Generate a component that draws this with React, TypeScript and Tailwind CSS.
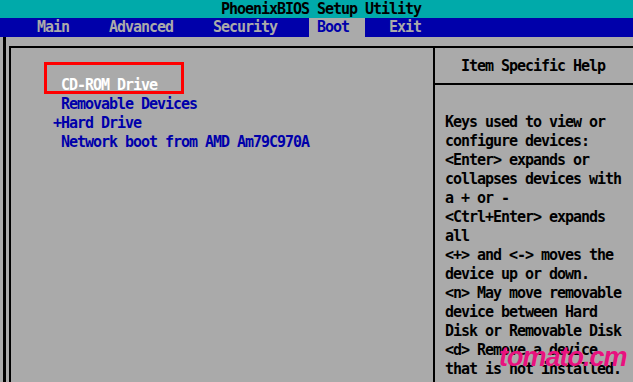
import React from "react";

const mono = "font-['DejaVu_Sans_Mono','Liberation_Mono',monospace] font-bold text-[15px] tracking-[-1.03px] whitespace-pre";

const helpLines = [
  "Keys used to view or",
  "configure devices:",
  "<Enter> expands or",
  "collapses devices with",
  "a + or -",
  "<Ctrl+Enter> expands",
  "all",
  "<+> and <-> moves the",
  "device up or down.",
  "<n> May move removable",
  "device between Hard",
  "Disk or Removable Disk",
  "<d> Remove a device",
  "that is not installed.",
];

export default function App() {
  return (
    <div className={`relative w-[633px] h-[382px] overflow-hidden bg-[#aaaaaa] flex flex-col ${mono}`}>
      {/* Title bar */}
      <div className="h-[18px] bg-[#00aaaa] text-black leading-[18px] pl-[221px] shrink-0">
        PhoenixBIOS Setup Utility
      </div>
      {/* Menu bar */}
      <div className="h-[19px] bg-[#0000aa] text-[#aaaaaa] leading-[19px] pl-[5px] shrink-0 flex">
        <span>{"    Main     Advanced     Security    "}</span>
        <span className="bg-[#aaaaaa] text-[#0000aa]">{" Boot  "}</span>
        <span>{"   Exit"}</span>
      </div>
      {/* Body */}
      <div className="flex-1 flex pl-[3px]">
        <div className="w-[3px] bg-black" />
        <div className="flex-1 pl-[3px] pt-[9px] flex flex-col">
          <div className="flex-1 border-t-2 border-l-2 border-black flex">
            {/* Left panel */}
            <div className="relative w-[422px] pt-[28px] pl-[42px] leading-[19px]">
              <div className="text-white">{" CD-ROM Drive"}</div>
              <div className="text-[#0000aa]">{" Removable Devices"}</div>
              <div className="text-[#0000aa]">{"+Hard Drive"}</div>
              <div className="text-[#0000aa]">{" Network boot from AMD Am79C970A"}</div>
              <div className="absolute left-[33px] top-[14px] w-[140px] h-[32px] border-[3px] border-[#ff0000]" />
            </div>
            {/* Right panel */}
            <div className="flex-1 border-l-2 border-black flex flex-col text-black">
              <div className="h-[37px] border-b-2 border-black pt-[9px] pl-[26px] leading-[19px]">
                Item Specific Help
              </div>
              <div className="pt-[28px] pl-[10px] leading-[19px]">
                {helpLines.map((l) => (
                  <div key={l}>{l}</div>
                ))}
              </div>
            </div>
          </div>
        </div>
      </div>
      {/* Watermark */}
      <div className="absolute left-[499px] top-[343px] font-['Liberation_Sans',Arial,sans-serif] italic font-bold text-[27px] leading-[28px] tracking-[-1px] text-[#e8127f]">
        tomato.cm
      </div>
    </div>
  );
}
